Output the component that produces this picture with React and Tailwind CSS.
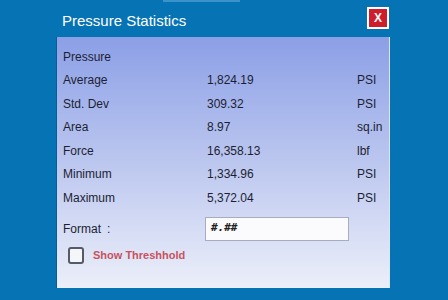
import React from 'react';

const rows = [
  { label: 'Pressure', value: '', unit: '' },
  { label: 'Average', value: '1,824.19', unit: 'PSI' },
  { label: 'Std. Dev', value: '309.32', unit: 'PSI' },
  { label: 'Area', value: '8.97', unit: 'sq.in' },
  { label: 'Force', value: '16,358.13', unit: 'lbf' },
  { label: 'Minimum', value: '1,334.96', unit: 'PSI' },
  { label: 'Maximum', value: '5,372.04', unit: 'PSI' },
];

const App = () => {
  return (
    <div
      className="w-[448px] h-[300px] bg-[#0673b4] flex flex-col overflow-hidden"
      style={{ fontFamily: '"Liberation Sans", Arial, sans-serif' }}
    >
      {/* Title bar */}
      <div className="relative h-[37px] flex items-center pl-[62px] pr-[59px]">
        <div className="absolute top-0 left-[163px] w-[77px] h-[2px] bg-[#3b93cc]"></div>
        <span className="flex-1 text-white text-[15px] pt-[6px]">Pressure Statistics</span>
        <button className="w-[22px] h-[22px] bg-[#cf1d2c] border-2 border-white flex items-center justify-center mb-[1px]">
          <span className="text-white text-[12px] font-bold leading-none">X</span>
        </button>
      </div>

      {/* Panel */}
      <div className="ml-[56px] w-[334px] h-[251px] border-l border-[#0b5c95] border-r border-r-[#dfe5f2] bg-gradient-to-b from-[#8c9fe6] via-[#bcc7ef] to-[#eceff9] pt-[8px] pl-[6px] text-[12px] text-[#1c1f33]">
        {rows.map((row, i) => (
          <div key={i} className="h-[23.5px] flex items-center">
            <span className="w-[144px]">{row.label}</span>
            <span className="w-[150px]">{row.value}</span>
            <span>{row.unit}</span>
          </div>
        ))}

        <div className="flex items-center mt-[7px] h-[24px]">
          <span className="w-[142px]">
            Format<span className="ml-[6px]">:</span>
          </span>
          <div className="w-[144px] h-[24px] bg-[#fbfbfd] border border-[#a7adbd] flex items-center pl-[5px]">
            <span className="font-bold italic text-[11px] text-[#222]" style={{ fontFamily: '"DejaVu Sans Mono", monospace' }}>#.##</span>
          </div>
        </div>

        <div className="flex items-center mt-[6px] h-[17px] pl-[5px]">
          <div className="w-[16px] h-[17px] border-2 border-[#555a66] rounded-[3px] bg-[#f5f6fa]"></div>
          <span className="ml-[9px] text-[#c8525f] font-bold text-[11px]">Show Threshhold</span>
        </div>
      </div>
    </div>
  );
};

export default App;
